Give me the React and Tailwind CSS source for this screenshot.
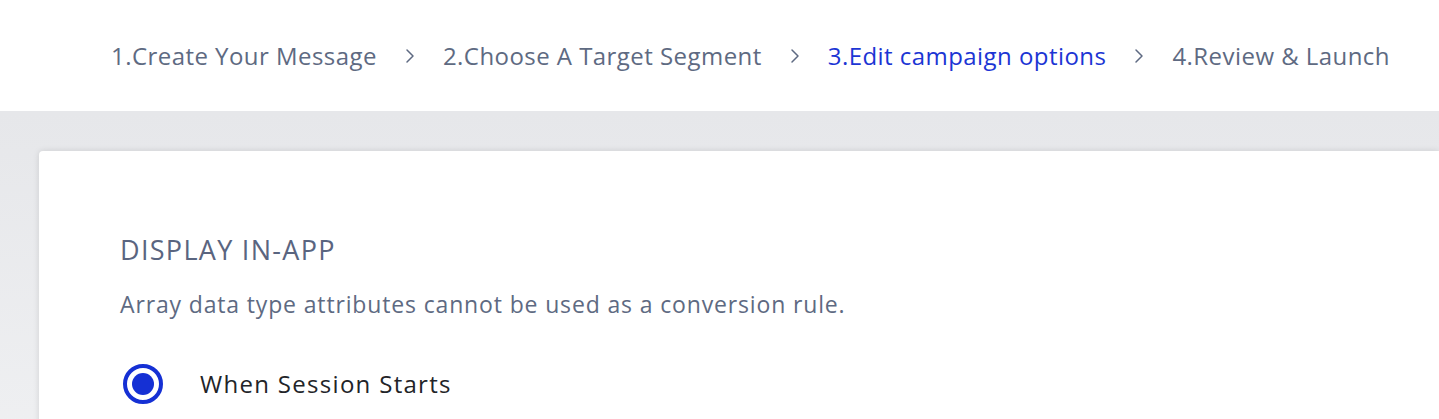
import { ChevronRight } from 'lucide-react';

const steps = [
  { label: '1.Create Your Message' },
  { label: '2.Choose A Target Segment' },
  { label: '3.Edit campaign options', active: true },
  { label: '4.Review & Launch' },
];

function App() {
  return (
    <div className="h-[419px] overflow-hidden bg-[#eceef1] font-['Open_Sans',sans-serif]">
      {/* Steps header */}
      <div className="h-[111px] bg-white flex items-center pl-[111px]">
        {steps.map((step, index) => (
          <div key={index} className="flex items-center">
            {index > 0 && (
              <ChevronRight className="mx-[21px] w-[24px] h-[24px] text-[#5e6a82]" strokeWidth={1.5} />
            )}
            <span
              className={
                'text-[24px] tracking-[0.45px] ' + (step.active ? 'text-[#1c35d4]' : 'text-[#5e6a82]')
              }
            >
              {step.label}
            </span>
          </div>
        ))}
      </div>

      {/* Card */}
      <div className="bg-gradient-to-b from-[#e6e7ea] to-[#eff0f2] pt-[40px] pl-[39px]">
        <div className="bg-white rounded-tl-[4px] shadow-[0_0_6px_rgba(0,0,0,0.12)] h-[300px] pl-[81px] pt-[85px]">
          <h2 className="text-[27px] tracking-[1.3px] text-[#5a6580] leading-none">DISPLAY IN-APP</h2>
          <p className="mt-[30px] text-[23px] tracking-[0.85px] text-[#5e6a82] leading-none">
            Array data type attributes cannot be used as a conversion rule.
          </p>
          <label className="mt-[48px] flex items-center">
            <span className="ml-[3px] w-[40px] h-[40px] rounded-full border-[4px] border-[#1530d4] flex items-center justify-center">
              <span className="w-[22px] h-[22px] rounded-full bg-[#1530d4]" />
            </span>
            <span className="ml-[37px] text-[24px] tracking-[1.3px] text-[#222428]">When Session Starts</span>
          </label>
        </div>
      </div>
    </div>
  );
}

export default App;
